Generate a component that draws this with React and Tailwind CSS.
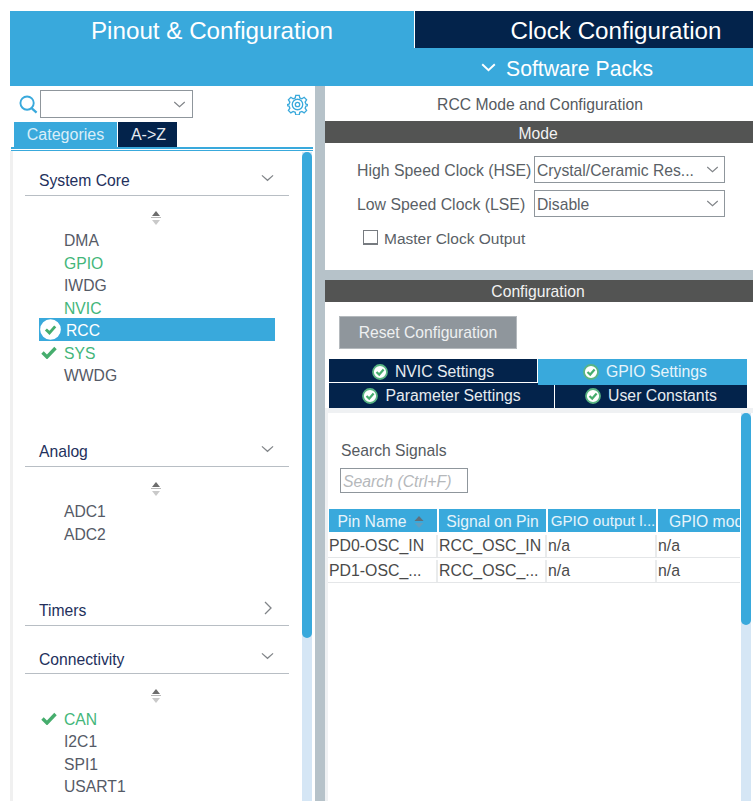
import React from "react";

function Chevron({ className }) {
  return (
    <svg viewBox="0 0 14 8" className={className} fill="none" stroke="#808488" strokeWidth="1.3">
      <path d="M1 1.2 L7 6.5 L13 1.2" />
    </svg>
  );
}

function SortIcon() {
  return (
    <div className="flex justify-center">
      <svg viewBox="0 0 12 15" className="w-[12px] h-[15px]">
        <path d="M6 0 L10 5 H2 Z" fill="#6d6d6d" />
        <path d="M1 6 H11 V7 H1 Z" fill="#b8b8b8" />
        <path d="M6 14 L10 9 H2 Z" fill="#c9c9c9" />
      </svg>
    </div>
  );
}

function Tick({ className }) {
  return (
    <svg viewBox="0 0 16 13" className={className}>
      <path d="M1.5 6.5 L6 11 L14.5 2" fill="none" stroke="#46ad6d" strokeWidth="3.4" />
    </svg>
  );
}

function RoundTick({ className, ring = "#5ab583" }) {
  return (
    <svg viewBox="0 0 16 16" className={className}>
      <circle cx="8" cy="8" r="7" fill="#ffffff" stroke={ring} strokeWidth="1.8" />
      <path d="M4.5 8 L7.2 10.6 L11.6 5.6" fill="none" stroke="#46ad6d" strokeWidth="2.2" />
    </svg>
  );
}

function SectionHead({ title, open = true, className = "", titleClass = "" }) {
  return (
    <div className={`ml-[15px] w-[264px] h-[29px] border-b border-[#b8bec4] flex items-center justify-between pl-[14px] pr-[15px] ${className}`}>
      <span className={`text-[15.7px] leading-[18px] text-[#23305c] ${titleClass}`}>{title}</span>
      {open ? (
        <Chevron className="w-[13px] h-[8px] -mt-[7px]" />
      ) : (
        <svg viewBox="0 0 8 14" className="w-[8px] h-[14px] -mt-[6px] mr-[2px]" fill="none" stroke="#808488" strokeWidth="1.3">
          <path d="M1 1 L7 7 L1 13" />
        </svg>
      )}
    </div>
  );
}

function Item({ label, state }) {
  const selected = state === "selected";
  const green = state === "green" || state === "tick";
  return (
    <div className={`relative ml-[29px] w-[236px] h-[22.5px] flex items-center pt-[4px] text-[15.7px] ${selected ? "bg-[#39a9dc] text-white pl-[27px]" : green ? "text-[#43b67a] pl-[25px]" : "text-[#555a66] pl-[25px]"}`}>
      {selected && <RoundTick ring="#ffffff" className="absolute left-[1px] top-[1px] w-[21px] h-[21px]" />}
      {state === "tick" && <Tick className="absolute left-[2px] top-[5px] w-[16px] h-[13px]" />}
      {label}
    </div>
  );
}

function Sidebar() {
  return (
    <div className="relative w-[305px] h-full bg-white overflow-hidden">
      {/* search row */}
      <div className="flex items-center h-[36px] pl-[9px] pr-[7px]">
        <svg viewBox="0 0 20 20" className="w-[19px] h-[19px]" fill="none" stroke="#39a9dc">
          <circle cx="8.5" cy="8.5" r="7" strokeWidth="2" />
          <path d="M13.5 14 L18.5 18.5" strokeWidth="2.4" />
        </svg>
        <div className="ml-[2px] w-[153px] h-[28px] border border-[#8f969c] flex items-center justify-end pr-[6px]">
          <Chevron className="w-[13px] h-[7px]" />
        </div>
        <svg viewBox="0 0 24 24" className="ml-auto w-[21px] h-[21px]" fill="none" stroke="#39a9dc">
          <path strokeWidth="1.5" d="M10 1.5h4l.6 3 2.4 1 2.6-1.7 2.8 2.8-1.7 2.6 1 2.4 3 .6v1l-3 .6-1 2.4 1.7 2.6-2.8 2.8-2.6-1.7-2.4 1-.6 3h-4l-.6-3-2.4-1-2.6 1.7-2.8-2.8 1.7-2.6-1-2.4-3-.6v-1l3-.6 1-2.4-1.7-2.6 2.8-2.8 2.6 1.7 2.4-1z" />
          <circle cx="12" cy="12" r="6" strokeWidth="1.5" />
          <circle cx="12" cy="12" r="2.5" strokeWidth="1.5" />
        </svg>
      </div>
      {/* category tabs */}
      <div className="flex h-[25px] ml-[4px] text-[16px]">
        <div className="w-[103px] bg-[#39a9dc] text-[#d9eef8] flex items-center justify-center">Categories</div>
        <div className="ml-px w-[59px] pl-[2px] bg-[#03234b] text-[#e6ebf0] flex items-center justify-center">{"A->Z"}</div>
      </div>
      <div className="ml-px w-[302px] h-[4px] border-t-2 border-b border-[#39a9dc]"></div>

      <div className="h-full border-l-[3px] border-[#f0f0f0] w-[302px]">
        <div className="-ml-[3px] pt-[16px]">
          <SectionHead title="System Core" />
          <div className="w-[292px] mt-[15px]"><SortIcon /></div>
          <div className="mt-[2px]">
            <Item label="DMA" />
            <Item label="GPIO" state="green" />
            <Item label="IWDG" />
            <Item label="NVIC" state="green" />
            <Item label="RCC" state="selected" />
            <Item label="SYS" state="tick" />
            <Item label="WWDG" />
          </div>
          <SectionHead title="Analog" className="mt-[52.5px]" />
          <div className="w-[292px] mt-[15px]"><SortIcon /></div>
          <div className="mt-[2px]">
            <Item label="ADC1" />
            <Item label="ADC2" />
          </div>
          <SectionHead title="Timers" open={false} className="mt-[53px]" />
          <SectionHead title="Connectivity" titleClass="pt-[2px]" className="mt-[19px]" />
          <div className="w-[292px] mt-[15px]"><SortIcon /></div>
          <div className="mt-[2.5px]">
            <Item label="CAN" state="tick" />
            <Item label="I2C1" />
            <Item label="SPI1" />
            <Item label="USART1" />
          </div>
        </div>
      </div>

      {/* scrollbar */}
      <div className="absolute left-[292px] top-[66px] bottom-0 w-[10px] bg-[#d5e6f5]">
        <div className="h-[486px] bg-[#39a9dc] rounded-[5px]"></div>
      </div>
    </div>
  );
}

function ConfigTab({ label, className }) {
  return (
    <div className={`flex items-center justify-center gap-[7px] text-[15.8px] ${className}`}>
      <RoundTick className="w-[16px] h-[16px]" />
      {label}
    </div>
  );
}

function HeadCell({ className, children }) {
  return <div className={`h-[23px] pt-[2px] bg-[#39a9dc] text-[#e6f4fb] flex items-center whitespace-nowrap overflow-hidden ${className}`}>{children}</div>;
}

function Row({ pin, signal }) {
  return (
    <div className="flex h-[25px] pt-[2px] border-b border-[#e4e6e8] text-[15.85px] text-[#4a4a4a]">
      <div className="w-[110px] pl-[1px] border-r-2 border-[#e9ebec] flex items-center">{pin}</div>
      <div className="w-[109px] pl-[1px] border-r-2 border-[#e9ebec] flex items-center">{signal}</div>
      <div className="w-[110px] pl-[1px] border-r-2 border-[#e9ebec] flex items-center">n/a</div>
      <div className="flex-1 pl-[1px] flex items-center">n/a</div>
    </div>
  );
}

function MainPanel() {
  return (
    <div className="flex-1 flex flex-col min-w-0 h-full">
      {/* mode section */}
      <div className="h-[184px] bg-white">
        <div className="h-[35px] pt-[2px] flex items-center justify-center text-[#555a60] text-[15.7px] pl-[2px]">RCC Mode and Configuration</div>
        <div className="h-[22px] pt-[4px] pr-[2px] bg-[#535453] text-[#f2f2f2] text-[15.7px] flex items-center justify-center">Mode</div>
        <div className="mt-[13px] flex items-center h-[27px] pl-[32px] text-[15.85px] text-[#5a5f66]">
          <span className="w-[177px] whitespace-nowrap pt-[2px]">High Speed Clock (HSE)</span>
          <div className="w-[191px] h-[27px] border border-[#8f969c] flex items-center justify-between pl-[2px] pr-[5px] text-[15.7px]">
            <span className="pt-[2px]">Crystal/Ceramic Res...</span>
            <Chevron className="w-[13px] h-[7px]" />
          </div>
        </div>
        <div className="mt-[7px] flex items-center h-[27px] pl-[32px] text-[15.85px] text-[#5a5f66]">
          <span className="w-[177px] whitespace-nowrap pt-[2px]">Low Speed Clock (LSE)</span>
          <div className="w-[191px] h-[27px] border border-[#8f969c] flex items-center justify-between pl-[2px] pr-[5px] text-[15.7px]">
            <span className="pt-[2px]">Disable</span>
            <Chevron className="w-[13px] h-[7px]" />
          </div>
        </div>
        <div className="mt-[7px] flex items-center h-[27px] pl-[38px] text-[15.5px] text-[#5a5f66]">
          <div className="w-[15px] h-[15px] border border-[#777b80] border-b-2"></div>
          <span className="ml-[6px] pt-[2px]">Master Clock Output</span>
        </div>
      </div>

      <div className="h-[10px] bg-[#b6c2c9]"></div>

      {/* configuration section */}
      <div className="flex-1 bg-white flex flex-col min-h-0 relative overflow-hidden">
        <div className="h-[22px] pt-[2px] pr-[2px] bg-[#535453] text-[#f2f2f2] text-[15.7px] flex items-center justify-center">Configuration</div>
        <div className="mt-[14px] ml-[14px] w-[178px] h-[33px] pt-[1px] bg-[#8f969c] border border-[#b4b9bd] text-[#eef0f1] text-[15.7px] flex items-center justify-center">Reset Configuration</div>
        <div className="mt-[10px] ml-[4px] w-[418px] h-[49px] relative">
          <div className="flex h-[24px]">
            <ConfigTab label="NVIC Settings" className="w-[208px] h-[23px] pt-[3px] bg-[#03234b] text-[#e6ebf0]" />
            <ConfigTab label="GPIO Settings" className="ml-px w-[209px] h-[26px] pl-[5px] bg-[#39a9dc] text-[#e6f4fb] relative z-10" />
          </div>
          <div className="flex h-[25px]">
            <ConfigTab label="Parameter Settings" className="w-[225px] bg-[#03234b] text-[#e6ebf0]" />
            <ConfigTab label="User Constants" className="ml-px w-[192px] bg-[#03234b] text-[#e6ebf0]" />
          </div>
        </div>
        <div className="flex-1 bg-[#eff1f3] pt-[5px] pl-[3px]">
          <div className="h-full bg-white relative overflow-hidden">
            <div className="pt-[29px] pl-[13px] text-[15.7px] leading-[18px] text-[#555a60]">Search Signals</div>
            <div className="mt-[8px] ml-[12px] w-[128px] h-[25px] pt-[2px] border border-[#8f969c] flex items-center pl-[2px] text-[15.8px] italic text-[#b5b8bb]">{"Search (Ctrl+F)"}</div>
            <div className="mt-[16px] w-[412px] overflow-hidden">
              <div className="w-[450px] flex ml-px mb-px text-[15.7px]">
                <HeadCell className="w-[108px] justify-center pr-[4px]">
                  Pin Name
                  <svg viewBox="0 0 10 12" className="ml-[8px] w-[10px] h-[12px]">
                    <path d="M5 0 L9.5 5 H.5 Z" fill="#60707c" />
                    <path d="M5 12 L9.5 7 H.5 Z" fill="#5f9fc2" />
                  </svg>
                </HeadCell>
                <HeadCell className="ml-[2px] w-[107px] justify-center">Signal on Pin</HeadCell>
                <HeadCell className="ml-[2px] w-[108px] justify-center pl-[2px] text-[15.2px]">GPIO output l...</HeadCell>
                <HeadCell className="ml-[2px] w-[105px] pl-[11px]">GPIO mode</HeadCell>
              </div>
              <Row pin="PD0-OSC_IN" signal="RCC_OSC_IN" />
              <Row pin="PD1-OSC_..." signal="RCC_OSC_..." />
            </div>
            {/* scrollbar */}
            <div className="absolute left-[413px] top-0 bottom-0 w-[10px] bg-[#d5e6f5]">
              <div className="h-[212px] bg-[#39a9dc] rounded-[5px]"></div>
            </div>
          </div>
        </div>
      </div>
    </div>
  );
}

export default function App() {
  return (
    <div className="w-[753px] h-[801px] bg-white pt-[11px] pl-[10px] overflow-hidden font-['Liberation_Sans',Arial,sans-serif]">
      <div className="flex h-[37px] text-[24.2px]">
        <div className="w-[404px] pt-[3px] bg-[#39a9dc] text-white flex items-center justify-center">{"Pinout & Configuration"}</div>
        <div className="w-px bg-white"></div>
        <div className="flex-1 pt-[3px] bg-[#03234b] text-white flex items-center justify-center pl-[64px]">Clock Configuration</div>
      </div>
      <div className="h-[38px] bg-[#39a9dc] text-white text-[21.2px] flex items-center pl-[471px]">
        <svg viewBox="0 0 16 10" className="w-[15px] h-[9px]" fill="none" stroke="#ffffff" strokeWidth="2.2">
          <path d="M1 1.5 L8 8 L15 1.5" />
        </svg>
        <span className="ml-[10px] pt-[3px]">Software Packs</span>
      </div>
      <div className="flex h-[715px]">
        <Sidebar />
        <div className="w-[10px] bg-[#b6c2c9]"></div>
        <MainPanel />
      </div>
    </div>
  );
}
